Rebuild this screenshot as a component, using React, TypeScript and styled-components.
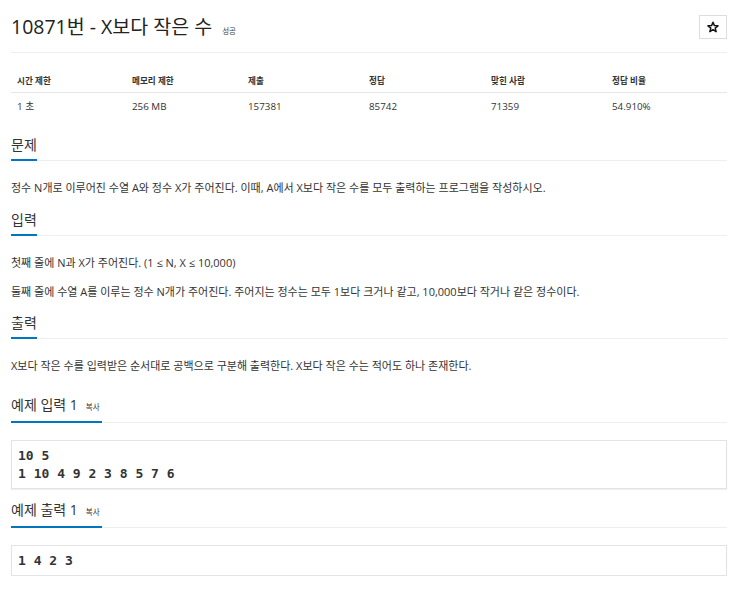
import React from "react";
import styled, { createGlobalStyle } from "styled-components";

const GlobalStyle = createGlobalStyle`
  html, body { margin: 0; padding: 0; background: #fff; }
  body {
    font-family: "Open Sans", "Noto Sans CJK KR", sans-serif;
    color: #333;
  }
`;

const Page = styled.main`
  display: flex;
  flex-direction: column;
  padding: 0 23px 0 11px;
  width: 716px;
`;

const Header = styled.header`
  display: flex;
  justify-content: space-between;
  align-items: center;
  height: 34px;
  padding: 10px 0 8px;
  border-bottom: 1px solid #eee;
`;

const TitleGroup = styled.div`
  display: flex;
  align-items: baseline;
  gap: 10px;
`;

const Title = styled.h1`
  margin: 0;
  font-size: 19.5px;
  font-weight: 400;
  line-height: 34px;
  color: #222;
`;

const Badge = styled.span`
  font-size: 7.5px;
  color: #444;
`;

const StarButton = styled.button`
  width: 28px;
  height: 24px;
  padding: 0;
  border: 1px solid #ddd;
  background: #fff;
  display: flex;
  align-items: center;
  justify-content: center;
  color: #111;
`;

const Table = styled.div`
  display: grid;
  grid-template-columns: 115fr 116fr 121fr 122fr 121fr 121fr;
  margin-top: 15px;
`;

const HeadCell = styled.div`
  height: 24px;
  padding: 0 6px;
  display: flex;
  align-items: center;
  font-size: 8.6px;
  font-weight: 700;
  color: #333;
  border-bottom: 1px solid #e6e6e6;
`;

const Cell = styled.div`
  height: 26px;
  padding: 0 6px;
  display: flex;
  align-items: center;
  font-size: 9.8px;
  color: #333;
`;

const Section = styled.section<{ $top: number }>`
  display: flex;
  flex-direction: column;
  margin-top: ${(p) => p.$top}px;
`;

const Headline = styled.h2`
  display: flex;
  margin: 0;
  border-bottom: 1px solid #eee;
  font-size: 14px;
  font-weight: 400;
  line-height: 20px;
  color: #333;
`;

const HeadText = styled.span`
  display: flex;
  align-items: baseline;
  gap: 8px;
  padding-bottom: 4px;
  margin-bottom: -1px;
  border-bottom: 2px solid #0076c0;
`;

const CopyLabel = styled.span`
  font-size: 7.5px;
  color: #333;
  padding-right: 2px;
`;

const Body = styled.div`
  display: flex;
  flex-direction: column;
  gap: 11px;
  padding-top: 18px;
`;

const Para = styled.p`
  margin: 0;
  font-size: 11px;
  line-height: 18px;
  color: #333;
`;

const SampleBox = styled.pre`
  margin: 17px 0 0;
  padding: 6px 6px 5px;
  border: 1px solid #e3e3e3;
  box-shadow: 0 1px 1px rgba(0, 0, 0, 0.06);
  background: #fff;
  font-family: "DejaVu Sans Mono", monospace;
  font-weight: 700;
  font-size: 13px;
  line-height: 18px;
  color: #333;
`;

const StarIcon = () => (
  <svg width="12" height="12" viewBox="0 0 24 24" fill="none" stroke="currentColor" strokeWidth="3" strokeLinejoin="round">
    <polygon points="12,2.5 14.8,9.2 22,9.6 16.4,14.2 18.3,21.3 12,17.3 5.7,21.3 7.6,14.2 2,9.6 9.2,9.2" />
  </svg>
);

const stats = [
  ["시간 제한", "1 초"],
  ["메모리 제한", "256 MB"],
  ["제출", "157381"],
  ["정답", "85742"],
  ["맞힌 사람", "71359"],
  ["정답 비율", "54.910%"],
];

export default function App() {
  return (
    <>
      <GlobalStyle />
      <Page>
        <Header>
          <TitleGroup>
            <Title>10871번 - X보다 작은 수</Title>
            <Badge>성공</Badge>
          </TitleGroup>
          <StarButton aria-label="즐겨찾기">
            <StarIcon />
          </StarButton>
        </Header>

        <Table>
          {stats.map(([h]) => (
            <HeadCell key={h}>{h}</HeadCell>
          ))}
          {stats.map(([h, v]) => (
            <Cell key={h + "v"}>{v}</Cell>
          ))}
        </Table>

        <Section $top={16}>
          <Headline>
            <HeadText>문제</HeadText>
          </Headline>
          <Body>
            <Para>
              정수 N개로 이루어진 수열 A와 정수 X가 주어진다. 이때, A에서 X보다 작은 수를 모두 출력하는 프로그램을 작성하시오.
            </Para>
          </Body>
        </Section>

        <Section $top={13}>
          <Headline>
            <HeadText>입력</HeadText>
          </Headline>
          <Body>
            <Para>첫째 줄에 N과 X가 주어진다. (1 ≤ N, X ≤ 10,000)</Para>
            <Para>
              둘째 줄에 수열 A를 이루는 정수 N개가 주어진다. 주어지는 정수는 모두 1보다 크거나 같고, 10,000보다 작거나 같은 정수이다.
            </Para>
          </Body>
        </Section>

        <Section $top={12}>
          <Headline>
            <HeadText>출력</HeadText>
          </Headline>
          <Body>
            <Para>X보다 작은 수를 입력받은 순서대로 공백으로 구분해 출력한다. X보다 작은 수는 적어도 하나 존재한다.</Para>
          </Body>
        </Section>

        <Section $top={20}>
          <Headline>
            <HeadText>
              예제 입력 1<CopyLabel>복사</CopyLabel>
            </HeadText>
          </Headline>
          <SampleBox>{"10 5\n1 10 4 9 2 3 8 5 7 6"}</SampleBox>
        </Section>

        <Section $top={11}>
          <Headline>
            <HeadText>
              예제 출력 1<CopyLabel>복사</CopyLabel>
            </HeadText>
          </Headline>
          <SampleBox>{"1 4 2 3"}</SampleBox>
        </Section>
      </Page>
    </>
  );
}
